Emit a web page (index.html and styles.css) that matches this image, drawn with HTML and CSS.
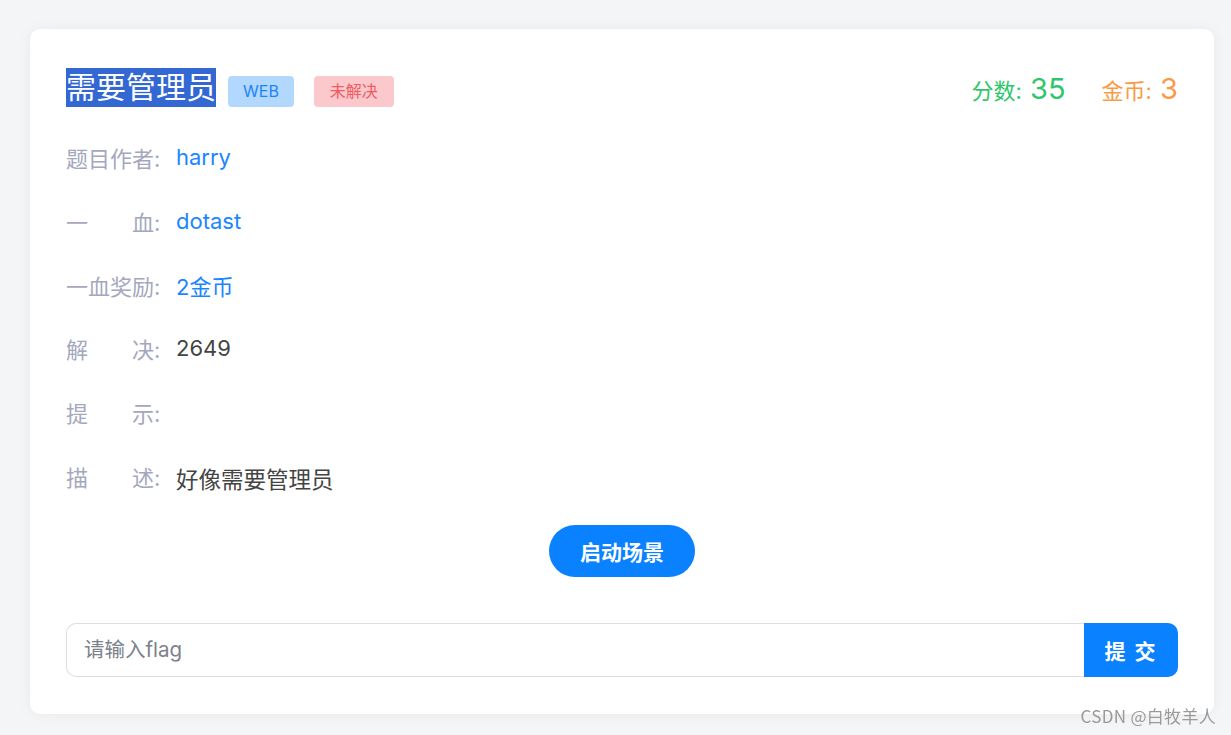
FILE: index.html
```html
<!DOCTYPE html>
<html lang="zh-CN">

<head>
    <meta charset="UTF-8">
    <meta name="viewport" content="width=device-width, initial-scale=1.0">
    <title>需要管理员</title>
    <link rel="stylesheet" href="styles.css">
</head>

<body>
    <div class="card">
        <div class="head">
            <div class="head-left">
                <span class="title">需要管理员</span>
                <span class="tag tag-web">WEB</span>
                <span class="tag tag-state">未解决</span>
            </div>
            <div class="head-right">
                <span class="score">分数: <b>35</b></span>
                <span class="coin">金币: <b>3</b></span>
            </div>
        </div>

        <div class="info">
            <div class="row">
                <span class="label"><i>题目作者</i>:</span>
                <span class="value link">harry</span>
            </div>
            <div class="row">
                <span class="label"><i>一血</i>:</span>
                <span class="value link">dotast</span>
            </div>
            <div class="row">
                <span class="label"><i>一血奖励</i>:</span>
                <span class="value link">2金币</span>
            </div>
            <div class="row">
                <span class="label"><i>解决</i>:</span>
                <span class="value">2649</span>
            </div>
            <div class="row">
                <span class="label"><i>提示</i>:</span>
                <span class="value"></span>
            </div>
            <div class="row">
                <span class="label"><i>描述</i>:</span>
                <span class="value desc">好像需要管理员</span>
            </div>
        </div>

        <div class="start">
            <button class="btn-start">启动场景</button>
        </div>

        <div class="submit">
            <input class="flag" type="text" placeholder="请输入flag">
            <button class="btn-submit">提 交</button>
        </div>
    </div>
    <div class="mark">CSDN @白牧羊人</div>
</body>

</html>
```

FILE: styles.css
```css
* {
    box-sizing: border-box;
}

body {
    margin: 0;
    padding: 29px 17px 21px 30px;
    background: #f4f5f7;
    font-family: Inter, "Noto Sans CJK SC", sans-serif;
}

.card {
    background: #fff;
    border-radius: 10px;
    box-shadow: 0 0 14px rgba(0, 0, 0, 0.05);
    padding: 36px;
    height: 685px;
}

.head {
    display: flex;
    justify-content: space-between;
    align-items: center;
    height: 44px;
}

.head-left {
    display: flex;
    align-items: flex-end;
}

.title {
    display: inline-block;
    height: 39px;
    line-height: 39px;
    font-size: 30px;
    color: #fff;
    background: #3368d3;
}

.tag {
    display: inline-block;
    height: 31px;
    line-height: 31px;
    padding: 0 15px;
    border-radius: 4px;
    font-size: 16px;
}

.tag-web {
    margin-left: 12px;
    background: #b3d8ff;
    color: #1a84f5;
}

.tag-state {
    margin-left: 20px;
    padding: 0 16px;
    background: #fbc8cb;
    color: #ef5a63;
}

.head-right {
    display: flex;
    align-items: baseline;
    font-size: 22px;
    padding-top: 2px;
}

.head-right b {
    font-weight: normal;
    font-size: 29px;
    margin-left: 2px;
}

.score {
    color: #2fc66b;
}

.coin {
    color: #fa9a46;
    margin-left: 36px;
}

.info {
    margin-top: 32px;
    display: flex;
    flex-direction: column;
    gap: 31.8px;
}

.row {
    display: flex;
    align-items: center;
    height: 32px;
    font-size: 22px;
}

.label {
    width: 110px;
    color: #a4a7bd;
    flex-shrink: 0;
}

.label i {
    font-style: normal;
    display: inline-block;
    width: 88px;
    text-align: justify;
    text-align-last: justify;
}

.value {
    color: #444;
}

.link {
    color: #1a86ff;
}

.desc {
    padding-top: 4px;
    font-size: 22.5px;
}

.start {
    margin-top: 33px;
    display: flex;
    justify-content: center;
}

.btn-start {
    height: 52px;
    width: 146px;
    border: none;
    border-radius: 26px;
    background: #0a82ff;
    color: #fff;
    font-family: inherit;
    font-size: 21px;
    font-weight: bold;
}

.submit {
    margin-top: 46px;
    display: flex;
    height: 54px;
}

.flag {
    flex: 1;
    height: 54px;
    border: 1px solid #dcdfe6;
    border-right: none;
    border-radius: 10px 0 0 10px;
    padding: 0 17px;
    font-family: inherit;
    font-size: 20.5px;
    color: #444;
    outline: none;
}

.flag::placeholder {
    color: #7d818c;
}

.btn-submit {
    width: 94px;
    height: 54px;
    border: none;
    border-radius: 0 10px 10px 0;
    background: #0a82ff;
    color: #fff;
    font-family: inherit;
    font-size: 21px;
    font-weight: bold;
    letter-spacing: 2px;
}

.mark {
    position: fixed;
    right: 15px;
    bottom: 7px;
    font-size: 17px;
    letter-spacing: 0.3px;
    color: #9a9a9a;
    font-family: "Noto Sans CJK SC", sans-serif;
}
```
